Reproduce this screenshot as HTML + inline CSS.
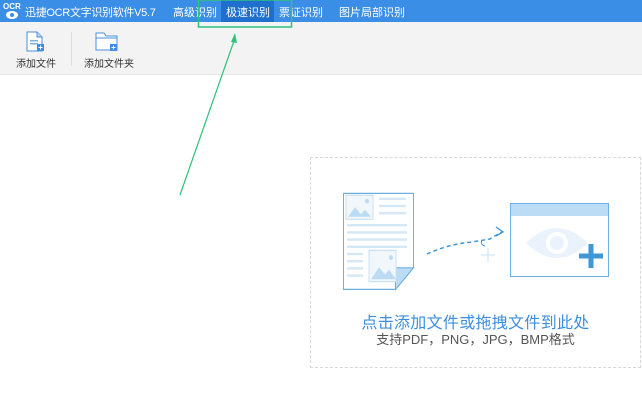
<!DOCTYPE html>
<html><head><meta charset="utf-8"><style>
*{margin:0;padding:0;box-sizing:border-box}
body{width:642px;height:400px;background:#fff;position:relative;overflow:hidden;font-family:"Liberation Sans","Noto Sans CJK SC",sans-serif}
.top{position:absolute;left:0;top:0;width:642px;height:22px;background:#3b8ee6;color:#fff;font-size:11px}
.top span{position:absolute;top:4px;white-space:nowrap}
.act{position:absolute;left:221px;top:0;width:53px;height:22px;background:#1f6fcf}
.tb{position:absolute;left:0;top:22px;width:642px;height:53px;background:#f3f3f3;border-bottom:1px solid #e6e6e6}
.lbl{position:absolute;font-size:10px;color:#333;white-space:nowrap}
.box{position:absolute;left:310px;top:157px;width:331px;height:211px;border:1px dashed #d8d8d8}
</style></head><body>
<div class="top">
<div class="act"></div>
<svg style="position:absolute;left:3px;top:1px" width="18" height="20"><text x="0" y="8" font-size="8" fill="#fff" font-family="Liberation Sans" font-weight="bold">OCR</text><ellipse cx="9" cy="14" rx="6" ry="4" fill="#fff"/><circle cx="9" cy="14" r="2" fill="#3b8ee6"/></svg>
<span style="left:25px;letter-spacing:-0.3px">迅捷OCR文字识别软件V5.7</span>
<span style="left:173px">高级识别</span>
<span style="left:226px">极速识别</span>
<span style="left:279px">票证识别</span>
<span style="left:339px">图片局部识别</span>
</div>
<div class="tb">
<svg style="position:absolute;left:25px;top:9px" width="22" height="22"><path d="M2 1h10l5 5v14H2z" fill="#fff" stroke="#4a90d9"/><path d="M12 1v5h5" fill="#bcd8f2" stroke="#4a90d9"/><rect x="5" y="9" width="8" height="1.5" fill="#7fb3e6"/><rect x="5" y="12" width="8" height="1.5" fill="#7fb3e6"/><rect x="12" y="13" width="7" height="7" fill="#3b8ee6"/><path d="M15.5 14.5v4M13.5 16.5h4" stroke="#fff"/></svg>
<svg style="position:absolute;left:95px;top:9px" width="24" height="22"><path d="M1 2h8l2 3h11v14H1z" fill="#fff" stroke="#4a90d9"/><path d="M1 7h21" stroke="#4a90d9"/><rect x="15" y="13" width="7" height="7" fill="#3b8ee6"/><path d="M18.5 14.5v4M16.5 16.5h4" stroke="#fff"/></svg>
<div style="position:absolute;left:71px;top:10px;width:1px;height:34px;background:#ddd"></div>
<span class="lbl" style="left:16px;top:33px">添加文件</span>
<span class="lbl" style="left:84px;top:33px">添加文件夹</span>
</div>
<svg style="position:absolute;left:0;top:0" width="642" height="400">
<rect x="198.5" y="0" width="93" height="27" fill="none" stroke="#2ec27a" stroke-width="1.5"/>
<path d="M180 195L235 38" stroke="#2ec27a" stroke-width="1.2"/><path d="M235 33l-4 9l6 1z" fill="#2ec27a"/>
</svg>
<div class="box"></div>
<svg style="position:absolute;left:340px;top:190px" width="280" height="105">
<g transform="translate(-1,-2) scale(1,1.2)">
<path d="M4.5 4.5h70v62l-18 18h-52z" fill="#fff" stroke="#6fb0e3"/>
<path d="M56.5 84.5l18-18h-18z" fill="#bcdcf5" stroke="#6fb0e3"/>
<rect x="7" y="6" width="27" height="20" fill="#f2f7fc" stroke="#c8e0f3"/><path d="M9 24l7-8 6 6 4-4 6 6z" fill="#bcdcf5"/><circle cx="28" cy="11" r="2" fill="#bcdcf5"/>
<g fill="#d6e8f7"><rect x="40" y="8" width="27" height="2"/><rect x="40" y="14" width="27" height="2"/><rect x="40" y="20" width="27" height="2"/><rect x="8" y="30" width="60" height="2"/><rect x="8" y="36" width="60" height="2"/><rect x="8" y="42" width="60" height="2"/><rect x="8" y="48" width="60" height="2"/><rect x="8" y="54" width="16" height="2"/><rect x="8" y="60" width="16" height="2"/><rect x="8" y="66" width="16" height="2"/><rect x="8" y="72" width="16" height="2"/></g>
<rect x="30" y="52" width="27" height="26" fill="#f2f7fc" stroke="#c8e0f3"/><path d="M32 76l8-10 6 6 4-4 7 8z" fill="#bcdcf5"/><circle cx="52" cy="58" r="2" fill="#bcdcf5"/>
</g>
<path d="M87 64q22-10 45-12q12-2 18-3q6-4 12-7" fill="none" stroke="#3f97d6" stroke-width="1.5" stroke-dasharray="4 3"/><path d="M142 50q-2 5 3 6" fill="none" stroke="#3f97d6" stroke-width="1"/><path d="M156 37l7 5-7 4" fill="none" stroke="#3f97d6" stroke-width="1.3"/>
<path d="M148 58v14M141 65h14" stroke="#c8dff2"/>
<rect x="170.5" y="13.5" width="98" height="73" fill="#fff" stroke="#6fb0e3"/><rect x="171" y="14" width="97" height="12" fill="#bcdcf5"/>
<path d="M186 53q31-30 62 0q-31 30-62 0z" fill="#eaf3fb"/><circle cx="217" cy="53" r="11" fill="#fff"/><circle cx="217" cy="53" r="7" fill="#eaf3fb"/>
<path d="M251 54v24M239 66h24" stroke="#3f97d6" stroke-width="5"/>
</svg>
<div style="position:absolute;left:310px;top:309px;width:331px;text-align:center;font-size:16px;color:#3d8ee0;letter-spacing:0.3px">点击添加文件或拖拽文件到此处</div>
<div style="position:absolute;left:310px;top:329px;width:331px;text-align:center;font-size:13px;color:#555">支持PDF，PNG，JPG，BMP格式</div>
</body></html>
